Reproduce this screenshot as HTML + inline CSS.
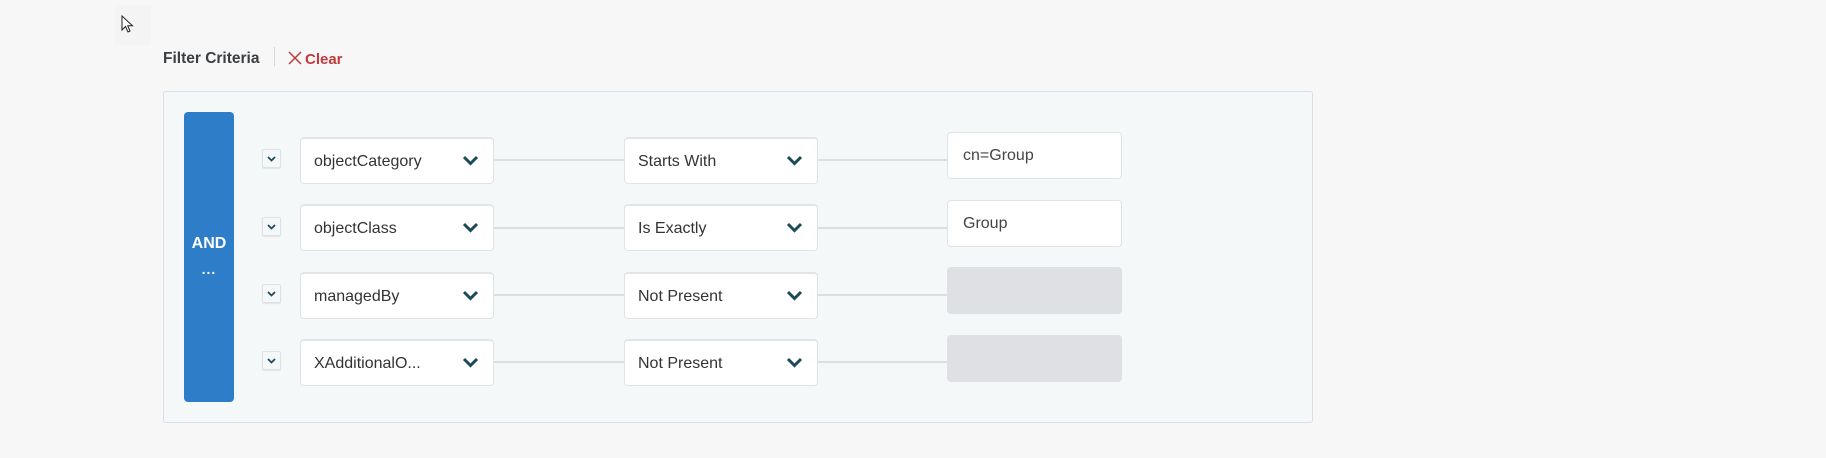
<!DOCTYPE html>
<html><head><style>
*{margin:0;padding:0;box-sizing:border-box}
body{width:1826px;height:458px;background:#f7f7f7;font-family:"Liberation Sans",sans-serif;position:relative;overflow:hidden}
.a{position:absolute}
.panel{left:163px;top:91px;width:1150px;height:332px;background:#f5f8f9;border:1px solid #d9dfe3;border-radius:3px}
.and{left:184px;top:112px;width:50px;height:290px;background:#2d7dc9;border-radius:4px;color:#fff;font-weight:bold;font-size:16px;text-align:center}
.sb{width:19px;height:19px;background:#f5f8f9;border:1px solid #dde2e5;border-radius:2px;box-shadow:0 1px 1px rgba(0,0,0,.08)}
.sel{height:47px;background:#fff;border:1px solid #dfe3e6;border-top:2px solid #e2e5e8;border-radius:4px;font-size:16px;color:#333;padding-left:13px;line-height:46px}
.line{height:2px;background:#dcdfe2}
.val{width:175px;height:47px;border:1px solid #dfe3e6;border-radius:4px;background:#fff;font-size:16px;color:#444;padding-left:15px;line-height:45px}
.dis{background:#dfe0e3;border-color:#dfe0e3}
</style></head><body>
<div class="a" style="left:115px;top:5px;width:36px;height:40px;background:#f4f4f4"></div>
<svg class="a" style="left:121px;top:15px" width="14" height="20" viewBox="0 0 14 20"><path d="M1 1 L1 15 L4.5 11.5 L7 17 L9 16 L6.7 10.8 L11.5 10.8 Z" fill="#fff" stroke="#222" stroke-width="1"/></svg>
<div class="a" style="left:163px;top:50px;font-size:15.5px;font-weight:bold;color:#3a3f44">Filter Criteria</div>
<div class="a" style="left:274px;top:47px;width:1px;height:19px;background:#d8d8d8"></div>
<svg class="a" style="left:288px;top:51px" width="14" height="14" viewBox="0 0 14 14"><path d="M1 1L13 13M13 1L1 13" stroke="#c0393b" stroke-width="1.5"/></svg>
<div class="a" style="left:305px;top:51px;font-size:15px;font-weight:bold;color:#c0393b">Clear</div>
<div class="a panel"></div>
<div class="a and"><div style="margin-top:123px">AND</div><div style="margin-top:8px;font-size:14px;letter-spacing:1px">...</div></div>

<div class="a line" style="left:493px;top:159px;width:131px"></div>
<div class="a line" style="left:817px;top:159px;width:130px"></div>
<div class="a line" style="left:493px;top:227px;width:131px"></div>
<div class="a line" style="left:817px;top:227px;width:130px"></div>
<div class="a line" style="left:493px;top:294px;width:131px"></div>
<div class="a line" style="left:817px;top:294px;width:130px"></div>
<div class="a line" style="left:493px;top:361px;width:131px"></div>
<div class="a line" style="left:817px;top:361px;width:130px"></div>

<div class="a sb" style="left:262px;top:149px"><svg width="17" height="17"><path d="M5 7l3.5 3.5L12 7" fill="none" stroke="#1d4a5a" stroke-width="1.8"/></svg></div>
<div class="a sb" style="left:262px;top:217px"><svg width="17" height="17"><path d="M5 7l3.5 3.5L12 7" fill="none" stroke="#1d4a5a" stroke-width="1.8"/></svg></div>
<div class="a sb" style="left:262px;top:284px"><svg width="17" height="17"><path d="M5 7l3.5 3.5L12 7" fill="none" stroke="#1d4a5a" stroke-width="1.8"/></svg></div>
<div class="a sb" style="left:262px;top:351px"><svg width="17" height="17"><path d="M5 7l3.5 3.5L12 7" fill="none" stroke="#1d4a5a" stroke-width="1.8"/></svg></div>

<div class="a sel" style="left:300px;top:137px;width:194px">objectCategory</div>
<div class="a sel" style="left:300px;top:204px;width:194px">objectClass</div>
<div class="a sel" style="left:300px;top:272px;width:194px">managedBy</div>
<div class="a sel" style="left:300px;top:339px;width:194px">XAdditionalO...</div>
<div class="a sel" style="left:624px;top:137px;width:194px">Starts With</div>
<div class="a sel" style="left:624px;top:204px;width:194px">Is Exactly</div>
<div class="a sel" style="left:624px;top:272px;width:194px">Not Present</div>
<div class="a sel" style="left:624px;top:339px;width:194px">Not Present</div>

<svg class="a" style="left:462px;top:155px" width="17" height="12"><path d="M2 2l6.5 6.5L15 2" fill="none" stroke="#1d4a5a" stroke-width="3"/></svg>
<svg class="a" style="left:462px;top:222px" width="17" height="12"><path d="M2 2l6.5 6.5L15 2" fill="none" stroke="#1d4a5a" stroke-width="3"/></svg>
<svg class="a" style="left:462px;top:290px" width="17" height="12"><path d="M2 2l6.5 6.5L15 2" fill="none" stroke="#1d4a5a" stroke-width="3"/></svg>
<svg class="a" style="left:462px;top:357px" width="17" height="12"><path d="M2 2l6.5 6.5L15 2" fill="none" stroke="#1d4a5a" stroke-width="3"/></svg>
<svg class="a" style="left:786px;top:155px" width="17" height="12"><path d="M2 2l6.5 6.5L15 2" fill="none" stroke="#1d4a5a" stroke-width="3"/></svg>
<svg class="a" style="left:786px;top:222px" width="17" height="12"><path d="M2 2l6.5 6.5L15 2" fill="none" stroke="#1d4a5a" stroke-width="3"/></svg>
<svg class="a" style="left:786px;top:290px" width="17" height="12"><path d="M2 2l6.5 6.5L15 2" fill="none" stroke="#1d4a5a" stroke-width="3"/></svg>
<svg class="a" style="left:786px;top:357px" width="17" height="12"><path d="M2 2l6.5 6.5L15 2" fill="none" stroke="#1d4a5a" stroke-width="3"/></svg>

<div class="a val" style="left:947px;top:132px">cn=Group</div>
<div class="a val" style="left:947px;top:200px">Group</div>
<div class="a val dis" style="left:947px;top:267px"></div>
<div class="a val dis" style="left:947px;top:335px"></div>
</body></html>
